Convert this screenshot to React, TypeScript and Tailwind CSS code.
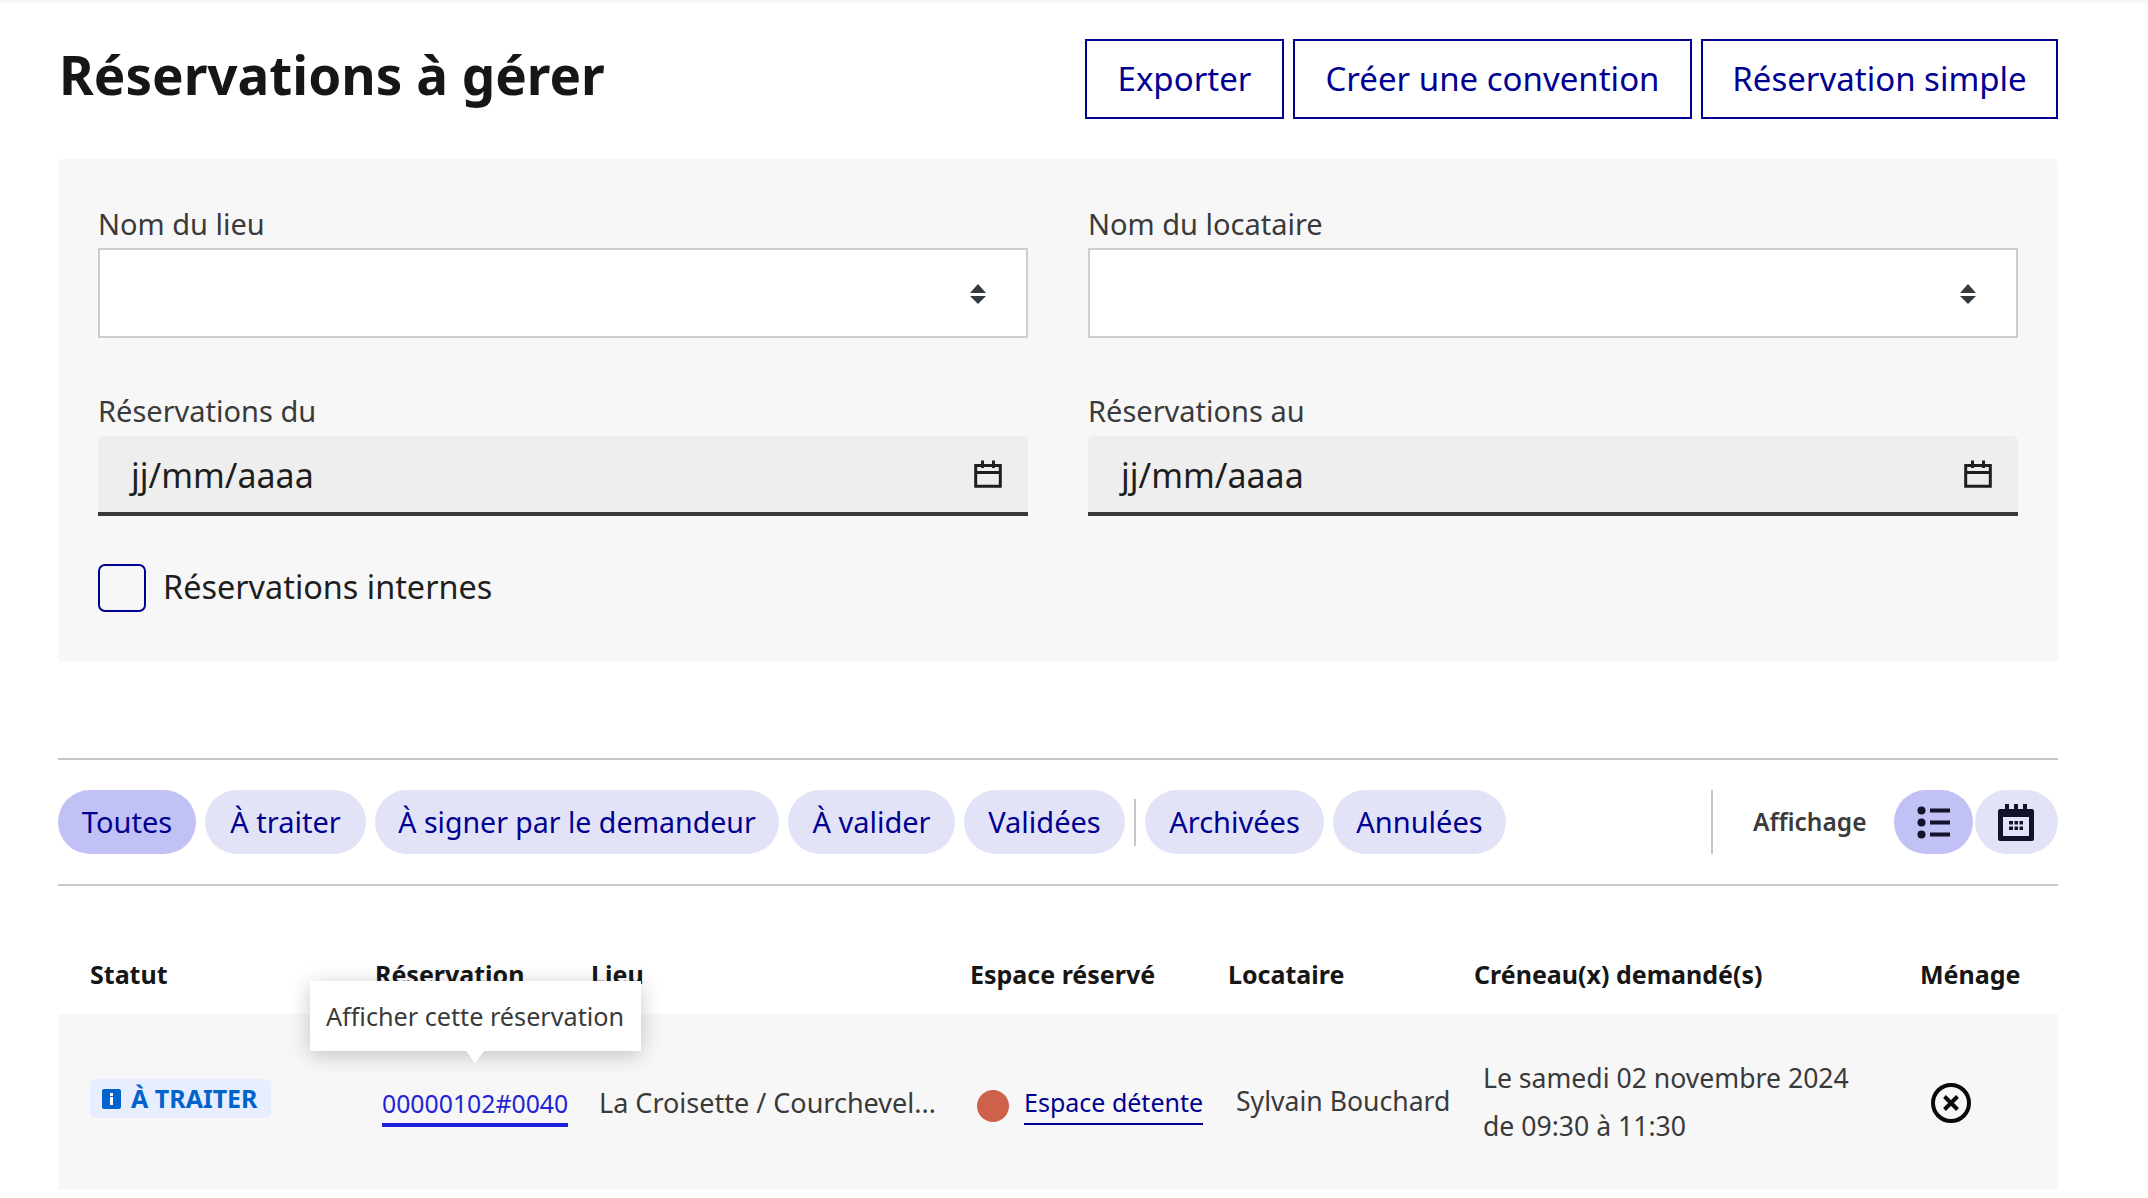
import React from "react";

const font = { fontFamily: '"Noto Sans", sans-serif' };

function Updown() {
  return (
    <svg width="16" height="20" viewBox="0 0 16 20" className="block">
      <path d="M8 0 16 9H0Z M0 12H16L8 20Z" fill="#333b40" />
    </svg>
  );
}

function CalOutline() {
  return (
    <svg width="28" height="28" viewBox="0 0 28 28" fill="none" className="block">
      <path d="M1.7 5.5H26.3V26.3H1.7Z M1.7 12.5H26.3" stroke="#1e1e1e" strokeWidth="3" />
      <path d="M8.5 0.5V8 M19.5 0.5V8" stroke="#1e1e1e" strokeWidth="3" />
    </svg>
  );
}

function SelectField({ label }: { label: string }) {
  return (
    <div>
      <div className="h-[40px] text-[29px] leading-[40px] text-[#3a3a3a] mb-[4px]">{label}</div>
      <div className="h-[90px] bg-white border-2 border-[#cecece] flex items-center justify-end pr-[40px] pt-[2px]">
        <Updown />
      </div>
    </div>
  );
}

function DateField({ label }: { label: string }) {
  return (
    <div>
      <div className="h-[40px] text-[29px] leading-[40px] text-[#3a3a3a] mb-[5px]">{label}</div>
      <div className="h-[80px] bg-[#eeeeee] rounded-t-[5px] border-b-[4px] border-[#3a3a3a] flex items-center justify-between pl-[33px] pr-[26px]">
        <span className="text-[34px] leading-[40px] text-[#1e1e1e] mt-[1px]">jj/mm/aaaa</span>
        <CalOutline />
      </div>
    </div>
  );
}

function Pill({ children, active, w }: { children: React.ReactNode; active?: boolean; w: string }) {
  return (
    <div
      className={`h-[64px] rounded-full flex items-center justify-center text-[29px] text-[#000091] ${w} ${
        active ? "bg-[#c1c1f5]" : "bg-[#e3e3f8]"
      }`}
    >
      {children}
    </div>
  );
}

const cols = "grid grid-cols-[285px_217px_378px_259px_245px_446px_1fr]";

export default function App() {
  return (
    <div className="w-[2148px] h-[1198px] bg-white overflow-hidden" style={font}>
      <div className="h-[3px] bg-[#f8f8f8]" />
      <div className="px-[58px] pr-[90px]">
        <div className="flex justify-between items-start pt-[36px]">
          <h1 className="text-[53px] leading-[79px] font-bold text-[#161616] -mt-[4px] ml-[1px]">Réservations à gérer</h1>
          <div className="flex gap-[9px] text-[#000091] text-[33px]">
            <button className="h-[80px] w-[199px] border-2 border-[#000091]">Exporter</button>
            <button className="h-[80px] w-[399px] border-2 border-[#000091]">Créer une convention</button>
            <button className="h-[80px] w-[357px] border-2 border-[#000091]">Réservation simple</button>
          </div>
        </div>

        <div className="mt-[40px] h-[503px] bg-[#f7f7f7] rounded-[5px] px-[40px] pt-[45px]">
          <div className="grid grid-cols-2 gap-x-[60px]">
            <SelectField label="Nom du lieu" />
            <SelectField label="Nom du locataire" />
          </div>
          <div className="grid grid-cols-2 gap-x-[60px] mt-[53px]">
            <DateField label="Réservations du" />
            <DateField label="Réservations au" />
          </div>
          <div className="flex items-center gap-[17px] mt-[48px]">
            <div className="w-[48px] h-[48px] border-2 border-[#000091] rounded-[7px]" />
            <span className="text-[32.4px] text-[#1e1e1e] -mt-[3px]">Réservations internes</span>
          </div>
        </div>

        <div className="mt-[96px] border-t-2 border-[#c4c6c6]" />

        <div className="mt-[30px] flex items-stretch">
          <div className="flex gap-[9px] items-center">
            <Pill active w="w-[138px]">Toutes</Pill>
            <Pill w="w-[161px]">À traiter</Pill>
            <Pill w="w-[404px]"><span className="text-[28.5px]">À signer par le demandeur</span></Pill>
            <Pill w="w-[167px]">À valider</Pill>
            <Pill w="w-[161px]">Validées</Pill>
            <div className="w-[2px] h-[47px] bg-[#c4c6c6]" />
            <Pill w="w-[179px]">Archivées</Pill>
            <Pill w="w-[173px]">Annulées</Pill>
          </div>
          <div className="ml-[205px] w-[2px] bg-[#c4c9d0]" />
          <div className="ml-[40px] w-[141px] flex items-center text-[24.5px] font-semibold text-[#3a3a3a]">Affichage</div>
          <div className="h-[64px] w-[79px] rounded-full bg-[#c1c1f5] flex items-center justify-center">
            <svg width="34" height="33" viewBox="0 0 34 33" className="block">
              <circle cx="4.5" cy="4.5" r="4" fill="#12122b" />
              <circle cx="4.5" cy="16.5" r="4" fill="#12122b" />
              <circle cx="4.5" cy="28.5" r="4" fill="#12122b" />
              <path d="M13 2.5H33V6.5H13Z M13 14.5H33V18.5H13Z M13 26.5H33V30.5H13Z" fill="#12122b" />
            </svg>
          </div>
          <div className="ml-[2px] h-[64px] w-[83px] rounded-full bg-[#e3e3f8] flex items-center justify-center pr-[2px]">
            <svg width="36" height="37" viewBox="0 0 36 37" className="block">
              <path
                fillRule="evenodd"
                d="M7 0H11V5H16V0H20V5H25V0H29V5H34Q36 5 36 7V35Q36 37 34 37H2Q0 37 0 35V7Q0 5 2 5H7Z M5 13V32H31V13Z"
                fill="#12122b"
              />
              <path d="M11 17H15V20.5H11Z M16.5 17H20V20.5H16.5Z M21.5 17H25V20.5H21.5Z M11 22.5H15V26H11Z M16.5 22.5H20V26H16.5Z M21.5 22.5H25V26H21.5Z" fill="#12122b" />
            </svg>
          </div>
        </div>

        <div className="mt-[30px] border-t-2 border-[#c4c9c9]" />

        <div className="relative">
          <div className={`${cols} h-[128px] pl-[32px] items-end pb-[21px] text-[25px] font-bold text-[#161616]`}>
            <div>Statut</div>
            <div>Réservation</div>
            <div className="-ml-[1px]">Lieu</div>
            <div>Espace réservé</div>
            <div className="-ml-[1px]">Locataire</div>
            <div>Créneau(x) demandé(s)</div>
            <div>Ménage</div>
          </div>
          <div className={`${cols} h-[176px] pl-[32px] bg-[#f7f7f7] items-center text-[26.6px] text-[#3a3a3a]`}>
            <div className="pb-[5px]">
              <span className="inline-flex items-center h-[39px] w-[181px] pl-[12px] rounded-[6px] bg-[#e8edff] text-[#0063cb] text-[25px] font-bold gap-[10px]">
                <svg width="19" height="20" viewBox="0 0 19 20" className="block shrink-0">
                  <rect width="19" height="20" rx="2" fill="#0063cb" />
                  <rect x="8" y="8" width="3" height="8" fill="#fff" />
                  <rect x="8" y="4" width="3" height="3" fill="#fff" />
                </svg>
                À TRAITER
              </span>
            </div>
            <div className="pl-[7px] pt-[5px]">
              <span className="inline-block h-[44px] leading-[40px] border-b-4 border-[#1f20dd] text-[#2323d6] text-[24.8px]">00000102#0040</span>
            </div>
            <div className="pl-[7px] pt-[2px] whitespace-nowrap text-[27px]">La Croisette / Courchevel...</div>
            <div className="pl-[7px] flex items-center gap-[15px] pt-[2px]">
              <span className="w-[32px] h-[32px] rounded-full bg-[#ce614a] shrink-0 mt-[5px]" />
              <span className="inline-block h-[44px] leading-[42px] border-b-2 border-[#000091] text-[#000091] text-[25px] whitespace-nowrap">Espace détente</span>
            </div>
            <div className="pl-[7px] whitespace-nowrap">Sylvain Bouchard</div>
            <div className="pl-[9px] leading-[48px] whitespace-nowrap">
              <div>Le samedi 02 novembre 2024</div>
              <div>de 09:30 à 11:30</div>
            </div>
            <div className="pl-[11px] pt-[2px]">
              <svg width="40" height="40" viewBox="0 0 40 40" fill="none" className="block">
                <circle cx="20" cy="20" r="18" stroke="#0a0a0a" strokeWidth="4" />
                <path d="M13.5 13.5 26.5 26.5 M26.5 13.5 13.5 26.5" stroke="#0a0a0a" strokeWidth="4" />
              </svg>
            </div>
          </div>

          <div className="absolute left-[252px] top-[95px] w-[331px] h-[70px] bg-white shadow-[0_4px_20px_rgba(0,0,0,0.22)] flex items-center pl-[16px] pt-[2px] text-[25.2px] text-[#3a3a3a]">
            Afficher cette réservation
            <svg width="18" height="12" viewBox="0 0 18 12" className="absolute left-[156px] top-[70px]">
              <path d="M0 0H18L9 12Z" fill="#fff" />
            </svg>
          </div>
        </div>
      </div>
    </div>
  );
}
